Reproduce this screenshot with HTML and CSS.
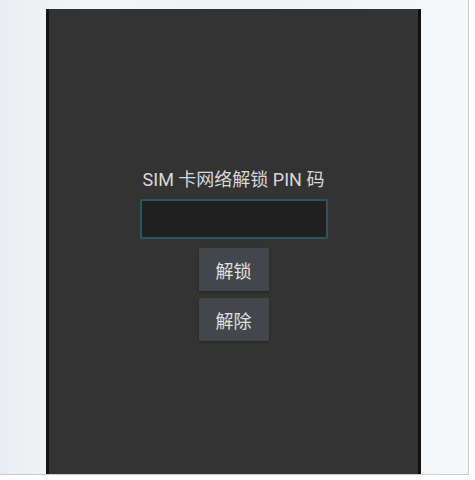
FILE: index.html
```html
<!DOCTYPE html>
<html lang="zh">
<head>
<meta charset="utf-8">
<link rel="stylesheet" href="styles.css">
</head>
<body>
<div class="frame">
  <div class="screen">
    <div class="title">SIM 卡网络解锁 PIN 码</div>
    <div class="pin-input"></div>
    <div class="btn btn-first">解锁</div>
    <div class="btn btn-second">解除</div>
  </div>
</div>
</body>
</html>
```
FILE: styles.css
```css
html, body {
  margin: 0;
  padding: 0;
  background: #ffffff;
}
body {
  width: 475px;
  height: 480px;
  overflow: hidden;
  font-family: Roboto, "Noto Sans CJK SC", sans-serif;
}
.frame {
  width: 469px;
  height: 475px;
  border-right: 1px solid #c9cbce;
  border-bottom: 1px solid #c9cbce;
  background: linear-gradient(90deg, #e9eef2 0%, #f4f6f8 20%, #eef2f5 50%, #f3f5f7 80%, #f6f7f9 100%);
  padding-top: 9px;
  padding-left: 46px;
  box-sizing: border-box;
}
.screen {
  width: 375px;
  height: 465px;
  box-sizing: border-box;
  background: #333333;
  border-left: 3px solid #151515;
  border-right: 3px solid #111111;
  display: flex;
  flex-direction: column;
  align-items: center;
  padding-top: 160px;
}
.title {
  color: #d8d8d8;
  font-size: 18px;
  line-height: 22px;
  height: 22px;
}
.pin-input {
  margin-top: 8px;
  width: 188px;
  height: 40px;
  box-sizing: border-box;
  background: #202020;
  border: 2px solid #2a5565;
  border-radius: 2px;
}
.btn {
  width: 70px;
  height: 43px;
  background: #43474b;
  color: #e0e0e0;
  font-size: 18px;
  display: flex;
  align-items: center;
  justify-content: center;
  box-shadow: 0 1px 2px rgba(0, 0, 0, 0.35);
}
.btn-first {
  margin-top: 9px;
}
.btn-second {
  margin-top: 7px;
}
```
